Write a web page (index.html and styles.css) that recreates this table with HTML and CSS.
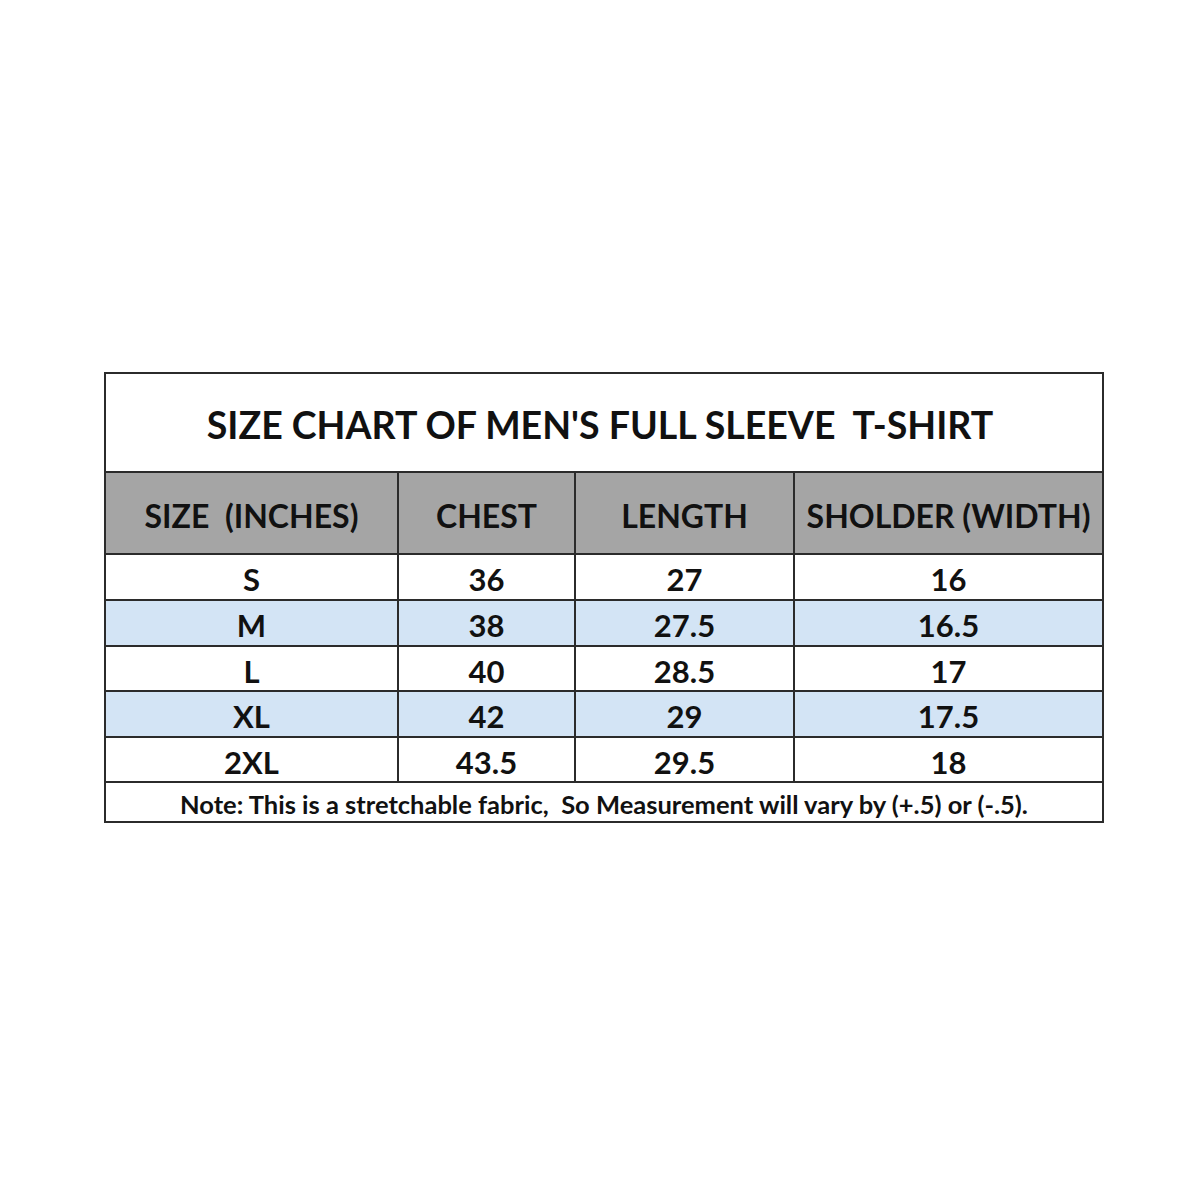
FILE: index.html
```html
<!DOCTYPE html>
<html>
<head>
<meta charset="utf-8">
<link rel="stylesheet" href="styles.css">
</head>
<body>
<div class="page">
  <table class="chart">
    <colgroup>
      <col class="c1"><col class="c2"><col class="c3"><col class="c4">
    </colgroup>
    <tr class="title-row"><td colspan="4">SIZE CHART OF MEN'S FULL SLEEVE&nbsp; T-SHIRT</td></tr>
    <tr class="head-row">
      <td>SIZE&nbsp; (INCHES)</td><td>CHEST</td><td>LENGTH</td><td>SHOLDER (WIDTH)</td>
    </tr>
    <tr class="data"><td>S</td><td>36</td><td>27</td><td>16</td></tr>
    <tr class="data alt"><td>M</td><td>38</td><td>27.5</td><td>16.5</td></tr>
    <tr class="data short"><td>L</td><td>40</td><td>28.5</td><td>17</td></tr>
    <tr class="data alt"><td>XL</td><td>42</td><td>29</td><td>17.5</td></tr>
    <tr class="data short"><td>2XL</td><td>43.5</td><td>29.5</td><td>18</td></tr>
    <tr class="note-row"><td colspan="4">Note: This is a stretchable fabric,&nbsp; So Measurement will vary by (+.5) or (-.5).</td></tr>
  </table>
</div>
</body>
</html>
```
FILE: styles.css
```css
html, body {
  margin: 0;
  padding: 0;
  background: #ffffff;
}
.page {
  width: 1200px;
  height: 1200px;
  padding-top: 372px;
  padding-left: 104px;
  box-sizing: border-box;
}
.chart {
  border-collapse: collapse;
  table-layout: fixed;
  width: 998px;
  font-family: Lato, "Liberation Sans", sans-serif;
  font-weight: 700;
  color: #111111;
  border: 2px solid #2b2b2b;
}
.c1 { width: 293px; }
.c2 { width: 177px; }
.c3 { width: 219px; }
.c4 { width: 309px; }
.chart td {
  border: 2px solid #2b2b2b;
  text-align: center;
  padding: 0;
  white-space: nowrap;
  overflow: hidden;
}
.title-row td {
  height: 99px;
  font-size: 37.5px;
  padding-top: 4px;
  padding-right: 8px;
  box-sizing: border-box;
}
.head-row td {
  height: 82px;
  background: #a5a5a5;
  font-size: 32px;
  padding-top: 4px;
  box-sizing: border-box;
}
.data td {
  height: 46px;
  font-size: 31px;
  padding-top: 4px;
  box-sizing: border-box;
  line-height: 34px;
}
.data.short td {
  height: 45px;
}
.data.alt td {
  background: #d3e4f5;
}
.note-row td {
  height: 40px;
  font-size: 25.5px;
  padding-top: 3px;
  box-sizing: border-box;
}
```
